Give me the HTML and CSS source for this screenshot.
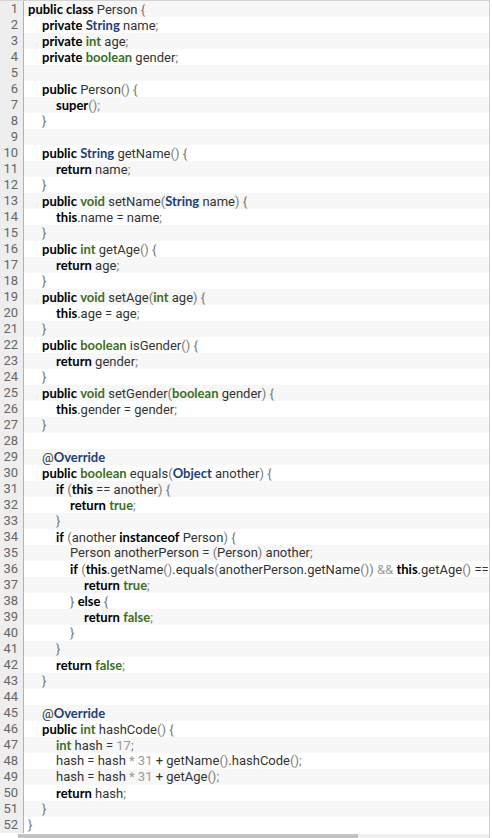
FILE: index.html
```html
<!DOCTYPE html>
<html>
<head>
<meta charset="utf-8">
<link rel="stylesheet" href="styles.css">
</head>
<body>
<div class="editor">
  <div class="rows">
    <div class="row"><span class="num">1</span><span class="code"><b class="kw">public class</b> Person <i class="p">{</i></span></div>
    <div class="row"><span class="num">2</span><span class="code i1"><b class="kw">private</b> <b class="ty">String</b> name<i class="p">;</i></span></div>
    <div class="row"><span class="num">3</span><span class="code i1"><b class="kw">private</b> <b class="pr">int</b> age<i class="p">;</i></span></div>
    <div class="row"><span class="num">4</span><span class="code i1"><b class="kw">private</b> <b class="pr">boolean</b> gender<i class="p">;</i></span></div>
    <div class="row"><span class="num">5</span><span class="code"></span></div>
    <div class="row"><span class="num">6</span><span class="code i1"><b class="kw">public</b> Person<i class="p">() {</i></span></div>
    <div class="row"><span class="num">7</span><span class="code i2"><b class="kw">super</b><i class="p">();</i></span></div>
    <div class="row"><span class="num">8</span><span class="code i1"><i class="p">}</i></span></div>
    <div class="row"><span class="num">9</span><span class="code"></span></div>
    <div class="row"><span class="num">10</span><span class="code i1"><b class="kw">public</b> <b class="ty">String</b> getName<i class="p">() {</i></span></div>
    <div class="row"><span class="num">11</span><span class="code i2"><b class="kw">return</b> name<i class="p">;</i></span></div>
    <div class="row"><span class="num">12</span><span class="code i1"><i class="p">}</i></span></div>
    <div class="row"><span class="num">13</span><span class="code i1"><b class="kw">public</b> <b class="pr">void</b> setName<i class="p">(</i><b class="ty">String</b> name<i class="p">) {</i></span></div>
    <div class="row"><span class="num">14</span><span class="code i2"><b class="kw">this</b>.name = name<i class="p">;</i></span></div>
    <div class="row"><span class="num">15</span><span class="code i1"><i class="p">}</i></span></div>
    <div class="row"><span class="num">16</span><span class="code i1"><b class="kw">public</b> <b class="pr">int</b> getAge<i class="p">() {</i></span></div>
    <div class="row"><span class="num">17</span><span class="code i2"><b class="kw">return</b> age<i class="p">;</i></span></div>
    <div class="row"><span class="num">18</span><span class="code i1"><i class="p">}</i></span></div>
    <div class="row"><span class="num">19</span><span class="code i1"><b class="kw">public</b> <b class="pr">void</b> setAge<i class="p">(</i><b class="pr">int</b> age<i class="p">) {</i></span></div>
    <div class="row"><span class="num">20</span><span class="code i2"><b class="kw">this</b>.age = age<i class="p">;</i></span></div>
    <div class="row"><span class="num">21</span><span class="code i1"><i class="p">}</i></span></div>
    <div class="row"><span class="num">22</span><span class="code i1"><b class="kw">public</b> <b class="pr">boolean</b> isGender<i class="p">() {</i></span></div>
    <div class="row"><span class="num">23</span><span class="code i2"><b class="kw">return</b> gender<i class="p">;</i></span></div>
    <div class="row"><span class="num">24</span><span class="code i1"><i class="p">}</i></span></div>
    <div class="row"><span class="num">25</span><span class="code i1"><b class="kw">public</b> <b class="pr">void</b> setGender<i class="p">(</i><b class="pr">boolean</b> gender<i class="p">) {</i></span></div>
    <div class="row"><span class="num">26</span><span class="code i2"><b class="kw">this</b>.gender = gender<i class="p">;</i></span></div>
    <div class="row"><span class="num">27</span><span class="code i1"><i class="p">}</i></span></div>
    <div class="row"><span class="num">28</span><span class="code"></span></div>
    <div class="row"><span class="num">29</span><span class="code i1"><span class="at">@</span><b class="ty">Override</b></span></div>
    <div class="row"><span class="num">30</span><span class="code i1"><b class="kw">public</b> <b class="pr">boolean</b> equals<i class="p">(</i><b class="ty">Object</b> another<i class="p">) {</i></span></div>
    <div class="row"><span class="num">31</span><span class="code i2"><b class="kw">if</b> <i class="p">(</i><b class="kw">this</b> == another<i class="p">) {</i></span></div>
    <div class="row"><span class="num">32</span><span class="code i3"><b class="kw">return</b> <b class="pr">true</b><i class="p">;</i></span></div>
    <div class="row"><span class="num">33</span><span class="code i2"><i class="p">}</i></span></div>
    <div class="row"><span class="num">34</span><span class="code i2"><b class="kw">if</b> <i class="p">(</i>another <b class="kw">instanceof</b> Person<i class="p">) {</i></span></div>
    <div class="row"><span class="num">35</span><span class="code i3">Person anotherPerson = <i class="p">(</i>Person<i class="p">)</i> another<i class="p">;</i></span></div>
    <div class="row"><span class="num">36</span><span class="code i3"><b class="kw">if</b> <i class="p">(</i><b class="kw">this</b>.getName<i class="p">()</i>.equals<i class="p">(</i>anotherPerson.getName<i class="p">())</i> <i class="op">&amp;&amp;</i> <b class="kw">this</b>.getAge<i class="p">()</i> == anotherPerson.getAge<i class="p">()) {</i></span></div>
    <div class="row"><span class="num">37</span><span class="code i4"><b class="kw">return</b> <b class="pr">true</b><i class="p">;</i></span></div>
    <div class="row"><span class="num">38</span><span class="code i3"><i class="p">}</i> <b class="kw">else</b> <i class="p">{</i></span></div>
    <div class="row"><span class="num">39</span><span class="code i4"><b class="kw">return</b> <b class="pr">false</b><i class="p">;</i></span></div>
    <div class="row"><span class="num">40</span><span class="code i3"><i class="p">}</i></span></div>
    <div class="row"><span class="num">41</span><span class="code i2"><i class="p">}</i></span></div>
    <div class="row"><span class="num">42</span><span class="code i2"><b class="kw">return</b> <b class="pr">false</b><i class="p">;</i></span></div>
    <div class="row"><span class="num">43</span><span class="code i1"><i class="p">}</i></span></div>
    <div class="row"><span class="num">44</span><span class="code"></span></div>
    <div class="row"><span class="num">45</span><span class="code i1"><span class="at">@</span><b class="ty">Override</b></span></div>
    <div class="row"><span class="num">46</span><span class="code i1"><b class="kw">public</b> <b class="pr">int</b> hashCode<i class="p">() {</i></span></div>
    <div class="row"><span class="num">47</span><span class="code i2"><b class="pr">int</b> hash = <i class="op">17</i><i class="p">;</i></span></div>
    <div class="row"><span class="num">48</span><span class="code i2">hash = hash <i class="op">* 31</i> + getName<i class="p">()</i>.hashCode<i class="p">();</i></span></div>
    <div class="row"><span class="num">49</span><span class="code i2">hash = hash <i class="op">* 31</i> + getAge<i class="p">();</i></span></div>
    <div class="row"><span class="num">50</span><span class="code i2"><b class="kw">return</b> hash<i class="p">;</i></span></div>
    <div class="row"><span class="num">51</span><span class="code i1"><i class="p">}</i></span></div>
    <div class="row"><span class="num">52</span><span class="code"><i class="p">}</i></span></div>
  </div>
  <div class="hscroll"><div class="thumb"></div></div>
</div>
</body>
</html>
```

FILE: styles.css
```css
html, body {
  margin: 0;
  padding: 0;
  background: #ffffff;
}
.editor {
  width: 490px;
  height: 838px;
  border-top: 1px solid #d4d4d4;
  border-right: 1px solid #cfcfcf;
  box-sizing: border-box;
  overflow: hidden;
  font-family: "Roboto", "Noto Sans", sans-serif;
  font-size: 13px;
  color: #333333;
  display: flex;
  flex-direction: column;
}
.rows {
  display: flex;
  flex-direction: column;
}
.row {
  display: flex;
  height: 16px;
  line-height: 16px;
  white-space: nowrap;
}
.row:nth-child(odd) .code {
  background: #f7f7f7;
}
.num {
  flex: 0 0 18px;
  width: 18px;
  padding-right: 5px;
  text-align: right;
  color: #666666;
  font-size: 13px;
  background: #eeeeee;
  border-right: 1px solid #6ce26c;
}
.code {
  flex: 1 1 auto;
  padding-left: 4px;
  overflow: hidden;
}
.i1 { padding-left: 18px; }
.i2 { padding-left: 32px; }
.i3 { padding-left: 46px; }
.i4 { padding-left: 60px; }
b {
  font-family: "Lato", "Roboto", sans-serif;
  font-weight: 700;
}
i { font-style: normal; }
.kw { color: #000000; }
.ty { color: #1f3d78; }
.pr { color: #3d6f22; }
.at { color: #333333; }
.p { color: #7a7a7a; }
.op { color: #9a9a9a; }
.hscroll {
  height: 5px;
  background: #ffffff;
}
.thumb {
  margin-left: 18px;
  width: 340px;
  height: 4px;
  margin-top: 1px;
  background: #c2c2c2;
  box-shadow: 340px 0 0 0 #efefef, 680px 0 0 0 #efefef;
}
```
